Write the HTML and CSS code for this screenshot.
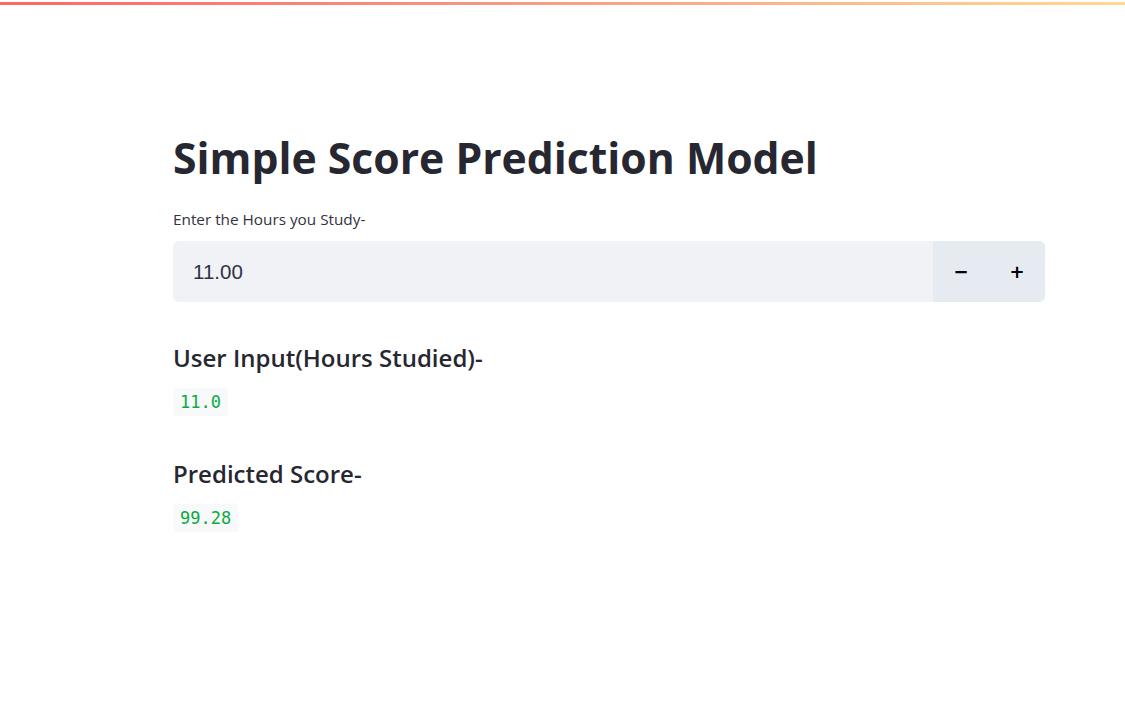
FILE: index.html
```html
<!DOCTYPE html>
<html>
<head>
<meta charset="utf-8">
<link rel="stylesheet" href="styles.css">
</head>
<body>
<div class="topline"></div>
<div class="decoration"></div>
<main class="main">
  <div class="block">
    <h1 class="title">Simple Score Prediction Model</h1>
    <div class="field">
      <label class="label">Enter the Hours you Study-</label>
      <div class="number-input">
        <div class="number-value">11.00</div>
        <div class="steppers">
          <button class="step">&minus;</button>
          <button class="step">+</button>
        </div>
      </div>
    </div>
    <h3 class="subheader first">User Input(Hours Studied)-</h3>
    <div class="code-row"><code class="code">11.0</code></div>
    <h3 class="subheader">Predicted Score-</h3>
    <div class="code-row"><code class="code">99.28</code></div>
  </div>
</main>
</body>
</html>
```
FILE: styles.css
```css
* { box-sizing: border-box; }
html, body { margin: 0; padding: 0; background: #ffffff; }
body {
  font-family: "Open Sans", "Noto Sans", sans-serif;
  color: #262730;
  width: 1125px;
  height: 713px;
  overflow: hidden;
}
.topline { height: 1px; background: #ffffff; }
.decoration {
  height: 3px;
  margin-top: 1px;
  background: linear-gradient(90deg, #ff4b4b 0%, #f57f6d 40%, #fbb07a 75%, #ffd27c 100%);
  opacity: 0.85;
}
.main {
  padding: 0 80px 0 173px;
}
.block {
  width: 872px;
  display: flex;
  flex-direction: column;
}
.title {
  margin: 123px 0 0 0;
  font-size: 42.7px;
  font-weight: 700;
  line-height: 60px;
  letter-spacing: 0;
}
.field { margin-top: 21px; display: flex; flex-direction: column; }
.label {
  font-size: 15.3px;
  line-height: 20px;
  color: #31333f;
}
.number-input {
  margin-top: 12px;
  height: 61px;
  display: flex;
  background: #f0f2f6;
  border-radius: 6px;
  overflow: hidden;
}
.number-value {
  flex: 1;
  display: flex;
  align-items: center;
  padding-left: 20px;
  font-family: "Liberation Sans", Arial, sans-serif;
  font-size: 20.5px;
  color: #31333f;
}
.steppers {
  width: 112px;
  display: flex;
  background: #e6eaf1;
}
.step {
  flex: 1;
  border: 0;
  background: transparent;
  font-family: "DejaVu Sans", sans-serif;
  font-size: 18px;
  font-weight: 700;
  color: #000000;
  padding: 0;
}
.subheader {
  margin: 42px 0 0 0;
  font-size: 24px;
  font-weight: 600;
  line-height: 32px;
}
.subheader.first { margin-top: 40px; }
.code-row { margin-top: 14px; display: flex; }
.code {
  font-family: "DejaVu Sans Mono", "Liberation Mono", monospace;
  font-size: 17px;
  color: #09ab3b;
  background: #f8f9fb;
  border-radius: 4px;
  padding: 4px 7px;
  line-height: 20px;
}
```
